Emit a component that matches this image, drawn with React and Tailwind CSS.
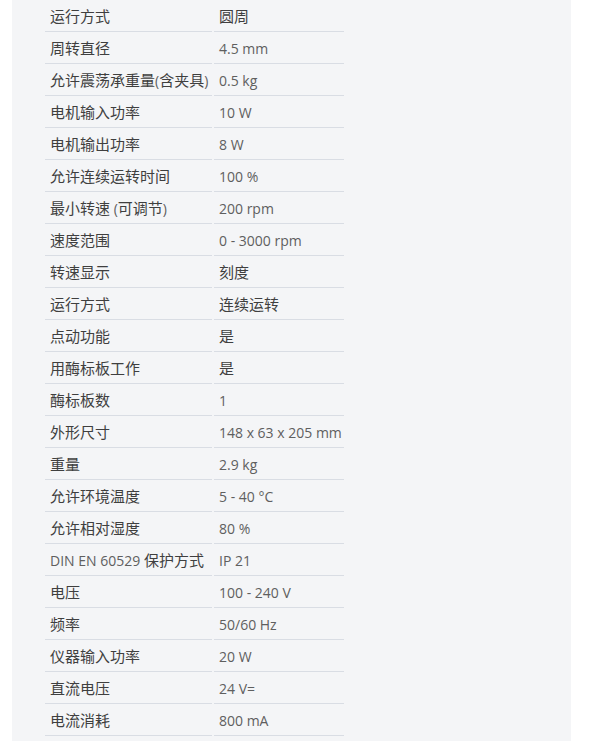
const specs = [
  ["运行方式", "圆周"],
  ["周转直径", "4.5 mm"],
  ["允许震荡承重量(含夹具)", "0.5 kg"],
  ["电机输入功率", "10 W"],
  ["电机输出功率", "8 W"],
  ["允许连续运转时间", "100 %"],
  ["最小转速 (可调节)", "200 rpm"],
  ["速度范围", "0 - 3000 rpm"],
  ["转速显示", "刻度"],
  ["运行方式", "连续运转"],
  ["点动功能", "是"],
  ["用酶标板工作", "是"],
  ["酶标板数", "1"],
  ["外形尺寸", "148 x 63 x 205 mm"],
  ["重量", "2.9 kg"],
  ["允许环境温度", "5 - 40 °C"],
  ["允许相对湿度", "80 %"],
  ["DIN EN 60529 保护方式", "IP 21"],
  ["电压", "100 - 240 V"],
  ["频率", "50/60 Hz"],
  ["仪器输入功率", "20 W"],
  ["直流电压", "24 V="],
  ["电流消耗", "800 mA"],
];

// chinese runs render a touch larger and darker than the latin text
function Mixed({ text }) {
  return (
    <span>
      {text.split(/([\u3000-\u9fff\uff00-\uffef]+)/).map((part, i) =>
        /[\u3000-\u9fff\uff00-\uffef]/.test(part) ? (
          <span key={i} className="text-[15px] text-[#3f3f3f]">
            {part}
          </span>
        ) : (
          part
        )
      )}
    </span>
  );
}

export default function App() {
  return (
    <div className="min-h-screen bg-white">
      <div
        className="ml-[12px] w-[559px] bg-[#f4f5f7] pl-[33px] pb-6 text-[14px] text-[#5f5f5f]"
        style={{ fontFamily: '"Open Sans", "Noto Sans CJK SC", sans-serif' }}
      >
        {specs.map(([label, value], i) => (
          <div key={i} className="flex gap-[2px]">
            <div className="flex h-[32px] w-[167px] items-center border-b border-[#d9dde4] pl-[5px] pt-[2px] whitespace-nowrap">
              <Mixed text={label} />
            </div>
            <div className="flex h-[32px] w-[130px] items-center border-b border-[#d9dde4] pl-[5px] pt-[2px] whitespace-nowrap">
              <Mixed text={value} />
            </div>
          </div>
        ))}
      </div>
    </div>
  );
}
